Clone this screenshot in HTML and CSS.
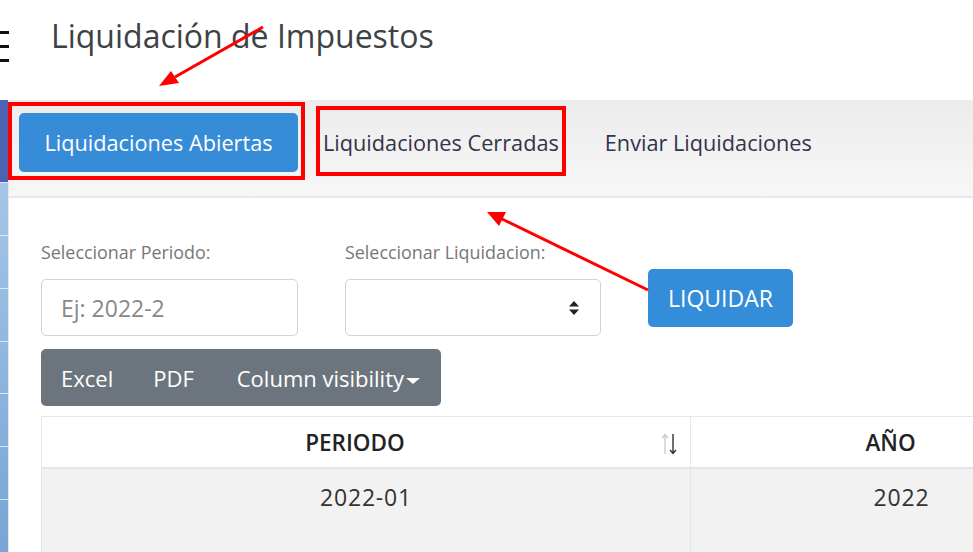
FILE: index.html
```html
<!DOCTYPE html>
<html lang="es">
<head>
  <meta charset="UTF-8" />
  <meta name="viewport" content="width=device-width, initial-scale=1.0"/>
  <title>Liquidación de Impuestos</title>
  <link rel="stylesheet" href="styles.css">
</head>
<body>

  <header class="topbar">
    <svg class="menu-icon" width="9" height="32" viewBox="0 0 9 32">
      <rect x="0" y="0" width="9" height="3" fill="#111"/>
      <rect x="0" y="14" width="9" height="3" fill="#111"/>
      <rect x="0" y="28" width="9" height="3" fill="#111"/>
    </svg>
    <h1>Liquidación de Impuestos</h1>
  </header>

  <div class="layout">
    <aside class="sidebar">
      <div class="side-top"></div>
      <div class="side-item"></div>
      <div class="side-item"></div>
      <div class="side-item"></div>
      <div class="side-item"></div>
      <div class="side-item"></div>
      <div class="side-item"></div>
      <div class="side-item"></div>
    </aside>

    <main class="content">
      <!-- Tabs -->
      <nav class="tabs">
        <button class="tab active">Liquidaciones Abiertas</button>
        <button class="tab">Liquidaciones Cerradas</button>
        <button class="tab">Enviar Liquidaciones</button>
      </nav>

      <section class="panel">
        <div class="filters">
          <div class="field">
            <label>Seleccionar Periodo:</label>
            <input type="text" placeholder="Ej: 2022-2" />
          </div>
          <div class="field">
            <label>Seleccionar Liquidacion:</label>
            <div class="select-box">
              <svg class="select-caret" width="10" height="16" viewBox="0 0 10 16">
                <path d="M5 1 L10 6.5 L0 6.5 Z" fill="#222"/>
                <path d="M5 15 L10 9.5 L0 9.5 Z" fill="#222"/>
              </svg>
            </div>
          </div>
          <button class="btn-liquidar">LIQUIDAR</button>
        </div>

        <div class="export-group">
          <button class="btn-excel">Excel</button>
          <button class="btn-pdf">PDF</button>
          <button class="btn-colvis">Column visibility<span class="caret"></span></button>
        </div>

        <div class="table-wrap">
          <table>
            <thead>
              <tr>
                <th class="col-periodo">PERIODO
                  <svg class="sort-icon" width="16" height="22" viewBox="0 0 16 22">
                    <path d="M4 21 V2 M1 5 L4 1.5 L7 5" stroke="#ccc" stroke-width="1.4" fill="none"/>
                    <path d="M12 1 V20 M9 17 L12 20.5 L15 17" stroke="#333" stroke-width="1.4" fill="none"/>
                  </svg>
                </th>
                <th class="col-anio">AÑO</th>
              </tr>
            </thead>
            <tbody>
              <tr>
                <td>2022-01</td>
                <td>2022</td>
              </tr>
              <tr>
                <td></td>
                <td></td>
              </tr>
            </tbody>
          </table>
        </div>
      </section>
    </main>
  </div>

  <!-- annotations drawn on top of the screenshot -->
  <svg class="annotations" width="973" height="552" viewBox="0 0 973 552">
    <rect x="10" y="104" width="293" height="74" fill="none" stroke="#f00" stroke-width="4"/>
    <rect x="318" y="108" width="246" height="66" fill="none" stroke="#f00" stroke-width="4"/>
    <line x1="263" y1="27" x2="175" y2="77" stroke="#f00" stroke-width="3"/>
    <path d="M159 86 L171 71 L179 83 Z" fill="#f00"/>
    <line x1="648" y1="290" x2="502" y2="219" stroke="#f00" stroke-width="3"/>
    <path d="M487 212 L506 212 L499 226 Z" fill="#f00"/>
  </svg>

</body>
</html>
```

FILE: styles.css
```css
body {
  margin: 0;
  padding: 0;
  font-family: 'Open Sans', 'Liberation Sans', sans-serif;
  color: #333;
  background-color: #fff;
  width: 973px;
  height: 552px;
  overflow: hidden;
  position: relative;
}

.topbar {
  height: 100px;
  display: flex;
  align-items: flex-start;
}

.menu-icon {
  margin-top: 31px;
}

.topbar h1 {
  margin: 14px 0 0 42px;
  font-size: 32px;
  font-weight: 400;
  color: #3d4246;
}

.layout {
  display: flex;
  height: 452px;
}

.sidebar {
  width: 8px;
  border-right: 1px solid #e3e6ea;
  display: flex;
  flex-direction: column;
  background: linear-gradient(#afcdeb, #77a5d5);
}

.side-top {
  height: 87px;
  background-color: #4b63b0;
}

.side-item {
  height: 55px;
  border-top: 1px solid #dbe7f4;
}

.content {
  flex: 1;
  min-width: 0;
}

.tabs {
  height: 98px;
  box-sizing: border-box;
  display: flex;
  align-items: flex-start;
  padding: 13px 0 0 10px;
  background: linear-gradient(#ececec, #f7f7f7);
  border-bottom: 2px solid #e6e8eb;
}

.tab {
  height: 59px;
  padding: 0;
  border: none;
  border-radius: 5px;
  background: none;
  font-family: 'Open Sans', sans-serif;
  font-size: 21.7px;
  color: #33334a;
  cursor: pointer;
  white-space: nowrap;
}

.tab.active {
  width: 279px;
  margin-right: 25px;
  background-color: #378cd8;
  color: #fff;
}

.tab + .tab {
  margin-right: 46px;
}

.panel {
  padding: 0 0 0 32px;
}

.filters {
  display: flex;
  align-items: flex-start;
  margin-top: 42px;
}

.field {
  display: flex;
  flex-direction: column;
  margin-right: 47px;
}

.field label {
  font-size: 17.9px;
  line-height: 24px;
  color: #777;
  margin-bottom: 15px;
}

.field input, .select-box {
  width: 257px;
  height: 57px;
  box-sizing: border-box;
  border: 1px solid #ced4da;
  border-radius: 5px;
  padding: 0 19px;
  font-family: 'Open Sans', sans-serif;
  font-size: 23px;
  color: #444;
}

.field input::placeholder {
  color: #888;
}

.select-box {
  width: 256px;
  display: flex;
  align-items: center;
  justify-content: flex-end;
}

.select-box .select-caret {
  margin-right: 2px;
}

.btn-liquidar {
  margin: 29px 0 0 0;
  width: 145px;
  height: 58px;
  padding: 0;
  border: none;
  border-radius: 5px;
  background-color: #348dd9;
  color: #fff;
  font-family: 'Open Sans', sans-serif;
  font-size: 23px;
  cursor: pointer;
}

.export-group {
  display: inline-flex;
  margin-top: 13px;
  height: 57px;
  width: 400px;
  box-sizing: border-box;
  background-color: #6c757d;
  border-radius: 5px;
}

.export-group button {
  border: none;
  background: none;
  color: #fff;
  font-family: 'Open Sans', sans-serif;
  font-size: 22px;
  padding: 0;
  cursor: pointer;
  white-space: nowrap;
}

.btn-excel {
  margin-left: 20px;
}

.btn-pdf {
  margin-left: 40px;
}

.btn-colvis {
  margin-left: 43px;
}

.caret {
  display: inline-block;
  vertical-align: middle;
  border-top: 6px solid #fff;
  border-left: 7px solid transparent;
  border-right: 7px solid transparent;
  margin-left: 2px;
}

.table-wrap {
  margin-top: 10px;
  width: 1100px;
}

table {
  border-collapse: collapse;
  width: 1072px;
  border: 1px solid #e3e6ea;
}

th, td {
  border-left: 1px solid #e3e6ea;
  text-align: center;
}

th {
  height: 50px;
  padding: 0 30px 0 8px;
  font-size: 22.5px;
  font-weight: 600;
  color: #222;
  border-bottom: 2px solid #e3e6ea;
  position: relative;
}

.col-periodo {
  width: 610px;
}

.sort-icon {
  position: absolute;
  right: 13px;
  top: 16px;
}

td {
  height: 76px;
  padding: 12px 8px 0 8px;
  vertical-align: top;
  font-size: 23px;
  letter-spacing: 0.8px;
  color: #333;
  border-bottom: 1px solid #e3e6ea;
}

tbody tr:nth-child(odd) {
  background-color: #f2f2f2;
}

.annotations {
  position: absolute;
  left: 0;
  top: 0;
  pointer-events: none;
}
```
